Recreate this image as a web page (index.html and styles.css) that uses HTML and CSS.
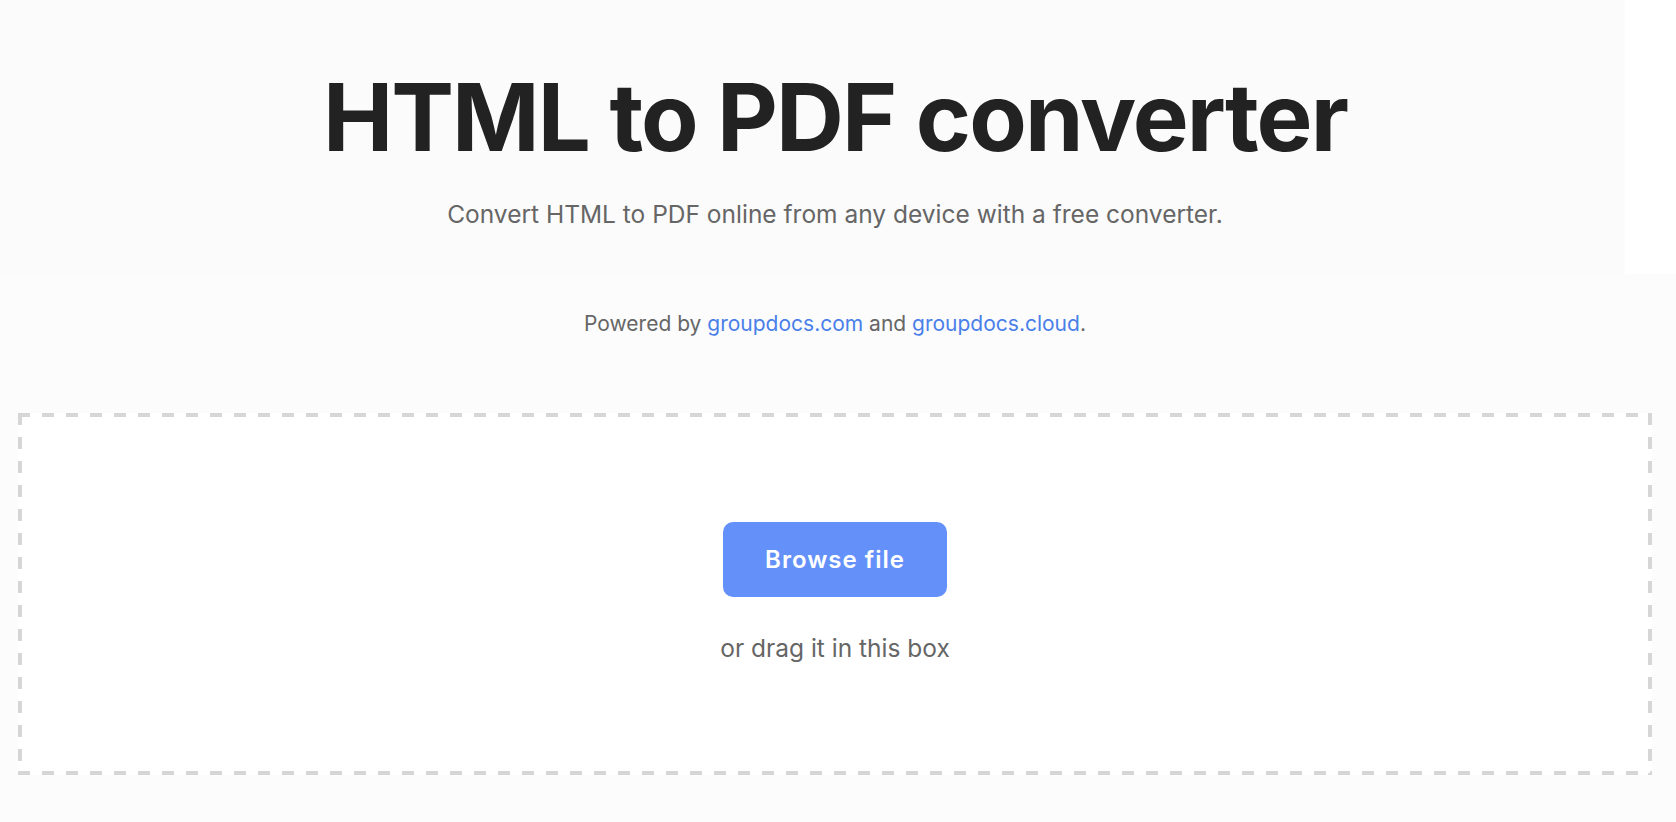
FILE: index.html
```html
<!DOCTYPE html>
<html lang="en">
<head>
<meta charset="utf-8">
<title>HTML to PDF converter</title>
<link rel="stylesheet" href="styles.css">
</head>
<body>
<header class="hero">
  <h1 class="title">HTML to PDF converter</h1>
  <p class="subtitle">Convert HTML to PDF online from any device with a free converter.</p>
</header>
<main class="main">
  <p class="powered">Powered by <a href="#">groupdocs.com</a> and <a href="#">groupdocs.cloud</a>.</p>
  <section class="dropzone">
    <button class="browse" type="button">Browse file</button>
    <p class="drag">or drag it in this box</p>
  </section>
</main>
</body>
</html>
```
FILE: styles.css
```css
html, body {
  margin: 0;
  padding: 0;
}
body {
  background: #ffffff;
  font-family: Inter, "Noto Sans", "Liberation Sans", sans-serif;
  min-height: 822px;
}
.hero {
  width: 1625px;
  height: 274px;
  background: #fbfbfb;
  padding-top: 61px;
  box-sizing: border-box;
}
.title {
  width: 1670px;
  margin: 0;
  text-align: center;
  font-size: 94px;
  line-height: 112px;
  font-weight: 700;
  color: #222222;
  letter-spacing: -1.9px;
}
.subtitle {
  width: 1670px;
  margin: 25px 0 0;
  text-align: center;
  font-size: 24.5px;
  line-height: 32px;
  color: #666666;
}
.main {
  background: #fcfcfc;
  padding-top: 36px;
  padding-bottom: 47px;
}
.powered {
  width: 1670px;
  margin: 0;
  text-align: center;
  font-size: 21px;
  line-height: 28px;
  color: #666666;
}
.powered a {
  color: #4a7fe9;
  text-decoration: none;
}
.dropzone {
  margin: 75px 0 0 18px;
  width: 1634px;
  box-sizing: border-box;
  background:
    repeating-linear-gradient(90deg, #d6d6d6 0 12px, transparent 12px 24px) left top / 100% 4px no-repeat,
    repeating-linear-gradient(90deg, #d6d6d6 0 12px, transparent 12px 24px) left bottom / 100% 4px no-repeat,
    repeating-linear-gradient(180deg, #d6d6d6 0 12px, transparent 12px 24px) left top / 4px 100% no-repeat,
    repeating-linear-gradient(180deg, #d6d6d6 0 12px, transparent 12px 24px) right top / 4px 100% no-repeat,
    #ffffff;
  padding: 109px 0 111px;
  display: flex;
  flex-direction: column;
  align-items: center;
}
.browse {
  width: 224px;
  height: 75px;
  border: none;
  border-radius: 10px;
  background: #6490f9;
  color: #ffffff;
  font-family: Inter, "Noto Sans", "Liberation Sans", sans-serif;
  font-size: 24px;
  font-weight: 600;
  letter-spacing: 1px;
  cursor: pointer;
}
.drag {
  margin: 35px 0 0;
  font-size: 24.5px;
  line-height: 32px;
  color: #666666;
}
```
